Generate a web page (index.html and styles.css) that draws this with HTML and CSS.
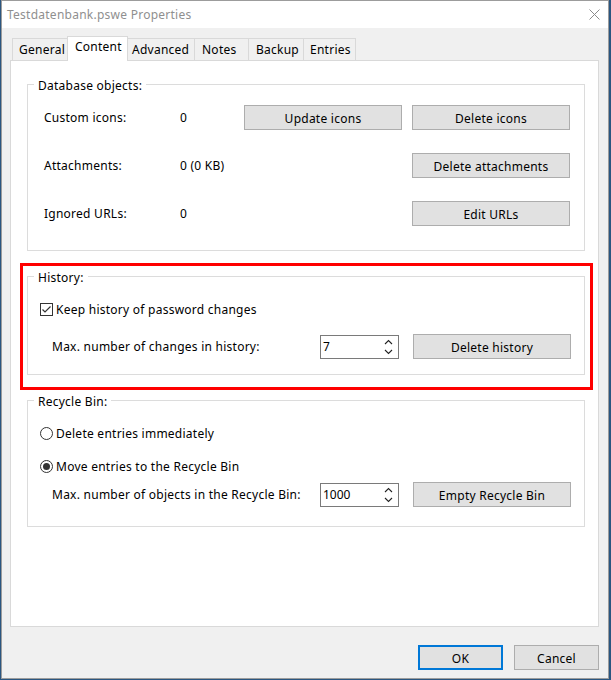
FILE: index.html
```html
<!DOCTYPE html>
<html>
<head>
<meta charset="utf-8">
<title>Testdatenbank.pswe Properties</title>
<link rel="stylesheet" href="styles.css">
</head>
<body>
<div class="desktop">
  <div class="window">
    <div class="titlebar">
      <span class="title">Testdatenbank.pswe Properties</span>
      <svg class="close" width="12" height="12" viewBox="0 0 12 12"><path d="M0.5 0.5 L10.5 10.5 M10.5 0.5 L0.5 10.5" stroke="#8a8a8a" stroke-width="1" fill="none"/></svg>
    </div>
    <div class="client">
      <div class="tabs">
        <div class="tab t-general">General</div>
        <div class="tab active t-content">Content</div>
        <div class="tab t-advanced">Advanced</div>
        <div class="tab t-notes">Notes</div>
        <div class="tab t-backup">Backup</div>
        <div class="tab t-entries">Entries</div>
      </div>
      <div class="panel">
        <fieldset class="group g-db">
          <legend>Database objects:</legend>
          <div class="db-grid">
            <span class="lbl">Custom icons:</span><span class="lbl">0</span><button class="btn">Update icons</button><button class="btn">Delete icons</button>
            <span class="lbl">Attachments:</span><span class="lbl">0 (0 KB)</span><span></span><button class="btn">Delete attachments</button>
            <span class="lbl">Ignored URLs:</span><span class="lbl">0</span><span></span><button class="btn">Edit URLs</button>
          </div>
        </fieldset>

        <fieldset class="group g-history">
          <legend>History:</legend>
          <div class="opt">
            <svg class="box" width="13" height="13" viewBox="0 0 13 13"><rect x="0.5" y="0.5" width="12" height="12" fill="#fff" stroke="#333"/><path d="M2.5 6.5 L5 9 L10.5 3.5" stroke="#333" stroke-width="1.2" fill="none"/></svg>
            <span>Keep history of password changes</span>
          </div>
          <div class="maxrow r-history">
            <span class="maxlbl">Max. number of changes in history:</span>
            <div class="spin"><span class="val">7</span>
              <svg class="arrows" width="9" height="16" viewBox="0 0 9 16"><path d="M1 5 L4.5 1.5 L8 5 M1 11 L4.5 14.5 L8 11" stroke="#222" stroke-width="1.1" fill="none"/></svg>
            </div>
            <button class="btn">Delete history</button>
          </div>
        </fieldset>

        <fieldset class="group g-recycle">
          <legend>Recycle Bin:</legend>
          <div class="opt">
            <svg class="box" width="13" height="13" viewBox="0 0 13 13"><circle cx="6.5" cy="6.5" r="6" fill="#fff" stroke="#333"/></svg>
            <span>Delete entries immediately</span>
          </div>
          <div class="opt o-second">
            <svg class="box" width="13" height="13" viewBox="0 0 13 13"><circle cx="6.5" cy="6.5" r="6" fill="#fff" stroke="#333"/><circle cx="6.5" cy="6.5" r="3.5" fill="#333"/></svg>
            <span>Move entries to the Recycle Bin</span>
          </div>
          <div class="maxrow r-recycle">
            <span class="maxlbl">Max. number of objects in the Recycle Bin:</span>
            <div class="spin"><span class="val">1000</span>
              <svg class="arrows" width="9" height="16" viewBox="0 0 9 16"><path d="M1 5 L4.5 1.5 L8 5 M1 11 L4.5 14.5 L8 11" stroke="#222" stroke-width="1.1" fill="none"/></svg>
            </div>
            <button class="btn">Empty Recycle Bin</button>
          </div>
        </fieldset>
      </div>
      <div class="footer">
        <button class="btn dlg ok">OK</button>
        <button class="btn dlg">Cancel</button>
      </div>
    </div>
  </div>
  <div class="annotation"></div>
</div>
</body>
</html>
```
FILE: styles.css
```css
html, body {
  margin: 0;
  padding: 0;
}
body {
  background: #2b5680;
  font-family: "Segoe UI", "Noto Sans", "Open Sans", sans-serif;
  font-size: 12px;
  letter-spacing: 0.25px;
  color: #000;
}
.desktop {
  position: relative;
  width: 611px;
  height: 680px;
  padding-left: 1px;
  box-sizing: border-box;
}
.window {
  width: 608px;
  height: 679px;
  box-sizing: border-box;
  border: 1px solid #9c9c9c;
  background: #f0f0f0;
  display: flex;
  flex-direction: column;
}
.titlebar {
  height: 27px;
  background: #fff;
  display: flex;
  align-items: center;
  justify-content: space-between;
  padding: 0 6px 0 5px;
  flex: none;
}
.title {
  color: #8f8f8f;
  line-height: 16px;
  margin-top: 1px;
}
.close {
  margin-right: 1px;
  margin-top: 1px;
}
.client {
  padding: 8px 9px 0 8px;
  display: flex;
  flex-direction: column;
}
.tabs {
  display: flex;
  align-items: flex-end;
  height: 24px;
  margin-left: 2px;
  position: relative;
  z-index: 1;
}
.tab {
  height: 22px;
  box-sizing: border-box;
  border: 1px solid #d9d9d9;
  border-bottom: none;
  background: #f0f0f0;
  padding-left: 6px;
  line-height: 22px;
  margin-right: -1px;
}
.tab.active {
  height: 25px;
  background: #fff;
  margin-bottom: -1px;
  line-height: 20px;
  padding-left: 7px;
  position: relative;
  z-index: 2;
}
.t-general { width: 56px; }
.t-content { width: 61px; }
.t-advanced { width: 68px; padding-left: 4px; }
.t-notes { width: 55px; padding-left: 7px; }
.t-backup { width: 56px; padding-left: 7px; }
.t-entries { width: 53px; padding-left: 6px; }

.panel {
  height: 567px;
  box-sizing: border-box;
  border: 1px solid #d9d9d9;
  background: #fff;
  padding-top: 15px;
}
.group {
  border: 1px solid #dcdcdc;
  margin: 0 13px 0 16px;
  padding: 13px 13px 24px 12px;
  min-width: 0;
}
.group legend {
  margin-left: -6px;
  padding: 0 4px;
  line-height: 17px;
  padding-top: 1px;
  height: 16px;
  box-sizing: border-box;
}
.g-history {
  margin-top: 17px;
  padding-top: 17px;
  padding-bottom: 15px;
}
.g-recycle {
  margin-top: 17px;
  padding-top: 17px;
  padding-bottom: 19px;
}
.db-grid {
  display: grid;
  grid-template-columns: 126px 54px 158px 158px;
  grid-auto-rows: 25px;
  column-gap: 10px;
  row-gap: 23px;
  margin-left: 4px;
  align-items: center;
}
.lbl {
  line-height: 16px;
  padding-top: 1px;
}
.btn {
  font-family: inherit;
  font-size: 12px;
  letter-spacing: 0.25px;
  color: #000;
  background: #e1e1e1;
  border: 1px solid #adadad;
  height: 25px;
  padding: 1px 0 0 0;
  margin: 0;
  box-sizing: border-box;
  text-align: center;
}
.opt {
  display: flex;
  align-items: center;
  height: 16px;
  line-height: 16px;
}
.opt span {
  padding-top: 1px;
}
.opt .box {
  margin-right: 3px;
  flex: none;
}
.o-second {
  margin-top: 17px;
}
.maxrow {
  display: flex;
  align-items: center;
  height: 25px;
  padding-left: 12px;
}
.r-history {
  margin-top: 17px;
}
.r-recycle {
  margin-top: 8px;
}
.maxlbl {
  flex: 1;
  line-height: 16px;
  padding-top: 1px;
}
.maxrow .btn {
  width: 158px;
}
.spin {
  width: 79px;
  height: 24px;
  box-sizing: border-box;
  border: 1px solid #7a7a7a;
  background: #fff;
  margin-right: 14px;
  display: flex;
  align-items: center;
  justify-content: space-between;
  padding: 0 5px 0 2px;
}
.val {
  line-height: 16px;
  letter-spacing: 0;
  padding-top: 1px;
}
.footer {
  display: flex;
  justify-content: flex-end;
  gap: 11px;
  margin-top: 18px;
  padding-right: 0;
}
.dlg {
  width: 85px;
  height: 25px;
}
.ok {
  border: 2px solid #0078d7;
}
.annotation {
  position: absolute;
  left: 20px;
  top: 263px;
  width: 573px;
  height: 127px;
  box-sizing: border-box;
  border: 3px solid #ff0000;
  pointer-events: none;
}
```
